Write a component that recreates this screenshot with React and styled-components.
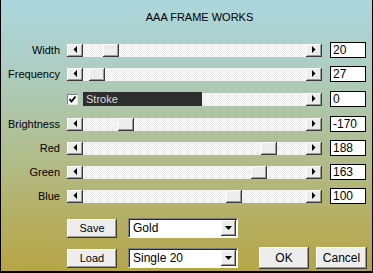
import styled, { createGlobalStyle } from "styled-components";

const GlobalStyle = createGlobalStyle`
  body {
    margin: 0;
    background: #fff;
  }
`;

const sliders = [
  { label: "Width", value: "20", thumb: 20 },
  { label: "Frequency", value: "27", thumb: 6 },
  { label: "Stroke", value: "0", stroke: true },
  { label: "Brightness", value: "-170", thumb: 35 },
  { label: "Red", value: "188", thumb: 178 },
  { label: "Green", value: "163", thumb: 168 },
  { label: "Blue", value: "100", thumb: 143 },
];

const raised = `
  box-sizing: border-box;
  background-color: #ededed;
  box-shadow: inset -1px -1px #3a3a3a, inset 1px 1px #ffffff,
    inset -2px -2px #9a9a9a;
`;

const Arrow = ({ dir }) => (
  <svg width="4" height="7" viewBox="0 0 4 7">
    {dir === "left" ? (
      <polygon points="4,0 4,7 0.5,3.5" fill="#000" />
    ) : (
      <polygon points="0,0 0,7 3.5,3.5" fill="#000" />
    )}
  </svg>
);

const App = () => {
  return (
    <>
      <GlobalStyle />
      <Dialog>
        <Title>AAA FRAME WORKS</Title>
        <Rows>
          {sliders.map((s) => (
            <Row key={s.label} $stroke={s.stroke}>
              {s.stroke ? (
                <>
                  <Label />
                  <StrokeGroup>
                    <Check>
                      <svg width="9" height="9" viewBox="0 0 9 9">
                        <polyline
                          points="1.5,4 3.5,6.5 7.5,1.5"
                          fill="none"
                          stroke="#000"
                          strokeWidth="1.8"
                        />
                      </svg>
                    </Check>
                    <StrokeLabel>{s.label}</StrokeLabel>
                    <Track>
                      <Spacer />
                      <ArrowBtn>
                        <Arrow dir="right" />
                      </ArrowBtn>
                    </Track>
                  </StrokeGroup>
                </>
              ) : (
                <>
                  <Label>{s.label}</Label>
                  <Track $fixed>
                    <ArrowBtn>
                      <Arrow dir="left" />
                    </ArrowBtn>
                    <Thumb $offset={s.thumb} />
                    <Spacer />
                    <ArrowBtn>
                      <Arrow dir="right" />
                    </ArrowBtn>
                  </Track>
                </>
              )}
              <ValueBox>{s.value}</ValueBox>
            </Row>
          ))}
        </Rows>
        <Footer>
          <FooterRow $h={20}>
            <Button $w={50} $h={19}>
              Save
            </Button>
            <Combo>
              <span>Gold</span>
              <DropBtn>
                <svg width="7" height="4" viewBox="0 0 7 4">
                  <polygon points="0,0 7,0 3.5,4" fill="#000" />
                </svg>
              </DropBtn>
            </Combo>
          </FooterRow>
          <FooterRow $h={22}>
            <Button $w={50} $h={19}>
              Load
            </Button>
            <Combo>
              <span>Single 20</span>
              <DropBtn>
                <svg width="7" height="4" viewBox="0 0 7 4">
                  <polygon points="0,0 7,0 3.5,4" fill="#000" />
                </svg>
              </DropBtn>
            </Combo>
            <Actions>
              <Button $w={50} $h={22} $big>
                OK
              </Button>
              <Button $w={51} $h={22} $big>
                Cancel
              </Button>
            </Actions>
          </FooterRow>
        </Footer>
      </Dialog>
    </>
  );
};

const Dialog = styled.div`
  box-sizing: border-box;
  width: 373px;
  height: 273px;
  display: flex;
  flex-direction: column;
  border-left: 1px solid #000;
  border-right: 1px solid #000;
  border-bottom: 2px solid #000;
  background: linear-gradient(
    180deg,
    #acd7dd 0%,
    #adcfc6 22%,
    #aec5a6 42%,
    #b2ba84 62%,
    #b5ae60 82%,
    #b6a547 100%
  );
  font-family: "Liberation Sans", Arial, sans-serif;
  font-size: 11px;
  color: #000;
`;

const Title = styled.div`
  box-sizing: border-box;
  height: 42px;
  padding: 10px 0 0 26px;
  line-height: 14px;
  text-align: center;
  font-size: 11px;
`;

const Rows = styled.div`
  display: flex;
  flex-direction: column;
  gap: 8px;
`;

const Row = styled.div`
  display: flex;
  align-items: center;
  height: 16px;
  margin: ${(p) => (p.$stroke ? "1px 0" : "0")};
`;

const Label = styled.div`
  width: 59px;
  margin-right: 7px;
  text-align: right;
  line-height: 13px;
  white-space: nowrap;
`;

const Track = styled.div`
  display: flex;
  height: 13px;
  ${(p) => (p.$fixed ? "width: 255px;" : "flex: 1;")}
  background-color: #ffffff;
  background-image: repeating-conic-gradient(#e9e9e9 0 25%, #ffffff 0 50%);
  background-size: 2px 2px;
`;

const StrokeGroup = styled.div`
  display: flex;
  align-items: center;
  width: 255px;
  height: 16px;
`;

const Check = styled.div`
  box-sizing: border-box;
  width: 11px;
  height: 11px;
  margin-right: 5px;
  display: flex;
  align-items: center;
  justify-content: center;
  background: #fff;
  border-top: 1px solid #808080;
  border-left: 1px solid #808080;
  border-right: 1px solid #e8e8e8;
  border-bottom: 1px solid #e8e8e8;
`;

const StrokeLabel = styled.div`
  box-sizing: border-box;
  width: 119px;
  height: 14px;
  padding-left: 3px;
  line-height: 14px;
  background: #2d2d2d;
  color: #dcdcdc;
`;

const ArrowBtn = styled.div`
  ${raised}
  width: 16px;
  height: 13px;
  display: flex;
  align-items: center;
  justify-content: center;
  padding: 0 1px 1px 0;
`;

const Thumb = styled.div`
  ${raised}
  width: 16px;
  height: 13px;
  margin-left: ${(p) => p.$offset}px;
`;

const Spacer = styled.div`
  flex: 1;
`;

const ValueBox = styled.div`
  box-sizing: border-box;
  width: 36px;
  height: 16px;
  margin-left: 8px;
  padding-left: 2px;
  border: 1px solid #000;
  background: #fff;
  line-height: 14px;
  font-size: 12px;
`;

const Footer = styled.div`
  display: flex;
  flex-direction: column;
  gap: 9px;
  margin-top: 14px;
  padding-left: 66px;
`;

const FooterRow = styled.div`
  display: flex;
  align-items: center;
  height: ${(p) => p.$h}px;
`;

const Button = styled.div`
  ${raised}
  width: ${(p) => p.$w}px;
  height: ${(p) => p.$h}px;
  display: flex;
  align-items: center;
  justify-content: center;
  font-size: ${(p) => (p.$big ? "12px" : "11px")};
  padding-bottom: 1px;
`;

const Combo = styled.div`
  box-sizing: border-box;
  width: 110px;
  height: 20px;
  margin-left: 11px;
  display: flex;
  align-items: center;
  justify-content: space-between;
  padding: 0 1px 0 4px;
  background: #fff;
  border-top: 1px solid #808080;
  border-left: 1px solid #808080;
  border-right: 1px solid #fff;
  border-bottom: 1px solid #fff;
  box-shadow: inset 1px 1px #2a2a2a;
  font-size: 12px;
`;

const DropBtn = styled.div`
  ${raised}
  width: 15px;
  height: 16px;
  display: flex;
  align-items: center;
  justify-content: center;
  padding: 0 1px 1px 0;
`;

const Actions = styled.div`
  display: flex;
  gap: 7px;
  margin-left: 21px;
`;

export default App;
